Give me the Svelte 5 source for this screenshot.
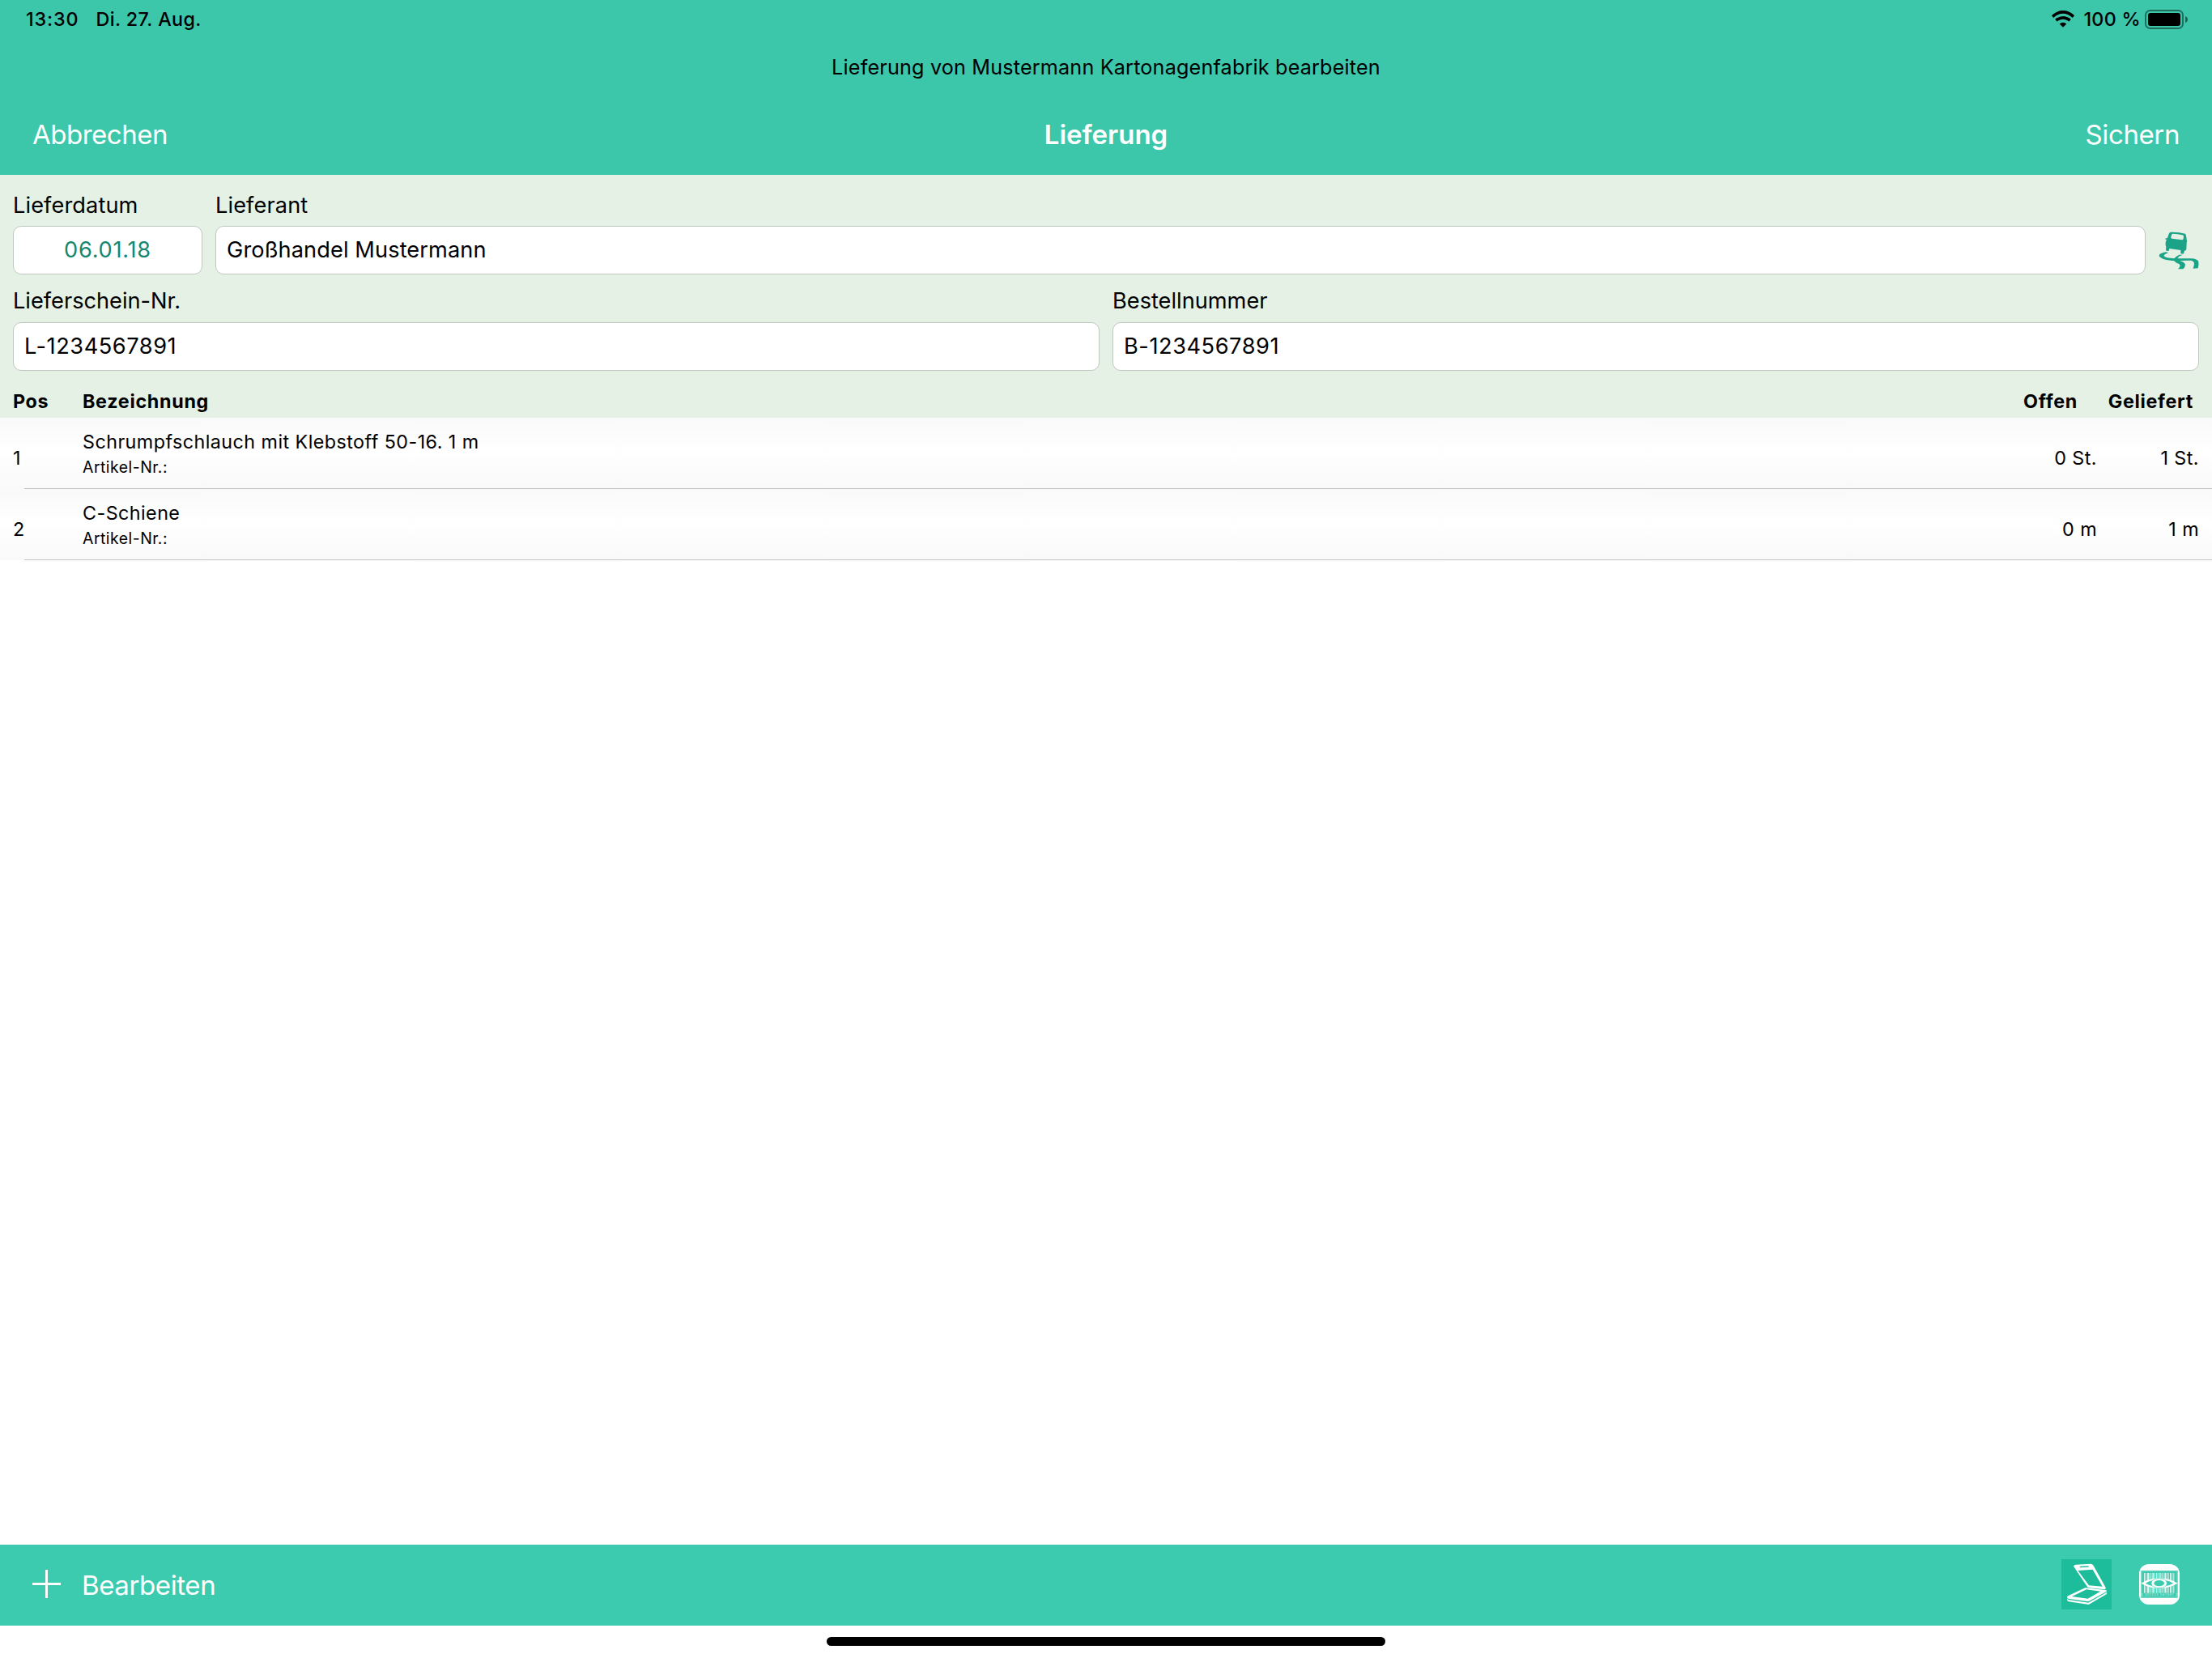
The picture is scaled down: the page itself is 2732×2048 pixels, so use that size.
<script>
  const statusTime = '13:30';
  const statusDate = 'Di. 27. Aug.';

  let delivery = $state({
    date: '06.01.18',
    supplier: 'Großhandel Mustermann',
    note: 'L-1234567891',
    order: 'B-1234567891'
  });

  const positions = [
    { pos: 1, name: 'Schrumpfschlauch mit Klebstoff 50-16. 1 m', open: '0 St.', delivered: '1 St.' },
    { pos: 2, name: 'C-Schiene', open: '0 m', delivered: '1 m' }
  ];

  // x offset and width of each bar
  const bars = [
    [384, 4], [391, 2], [396, 6], [404, 3], [410, 2], [415, 6], [424, 2], [429, 4],
    [436, 2], [441, 5], [449, 3], [455, 2], [460, 6], [469, 3], [475, 2], [480, 5],
    [488, 2], [493, 3]
  ];
</script>

<div class="screen">
  <header>
    <div class="status">
      <span class="time">{statusTime}</span>
      <span class="date">{statusDate}</span>
      <svg class="wifi" viewBox="105 41 84 62">
        <path d="M108 63Q147 29 186 63" fill="none" stroke="#000" stroke-width="11" />
        <path d="M121 77Q147 57 173 77" fill="none" stroke="#000" stroke-width="11" />
        <path d="M134 90Q147 79 160 90L147 103Z" />
      </svg>
      <span class="percent">100 %</span>
      <svg class="battery" viewBox="0 0 54 24">
        <rect x="1" y="1" width="46" height="22" rx="5.5" fill="none" stroke="#000" stroke-opacity=".45" stroke-width="2" />
        <rect x="4" y="4" width="40" height="16" rx="3" />
        <path d="M50 8q3 1 3 4t-3 4z" fill-opacity=".5" />
      </svg>
    </div>
    <div class="subtitle">Lieferung von Mustermann Kartonagenfabrik bearbeiten</div>
    <nav>
      <button class="cancel">Abbrechen</button>
      <h1>Lieferung</h1>
      <button class="save">Sichern</button>
    </nav>
  </header>

  <section class="form">
    <div class="fields">
      <label class="small">
        <span>Lieferdatum</span>
        <input class="day" bind:value={delivery.date} />
      </label>
      <label>
        <span>Lieferant</span>
        <input bind:value={delivery.supplier} />
      </label>
      <svg class="car" viewBox="78 43 150 144">
        <path
          fill-rule="evenodd"
          d="M124 48Q152 47 177 54Q180 57 182 75L182 80Q183 84 182 91L181 112Q179 117 174 117L171 128Q165 130 160 127L160 115L118 109L116 117Q111 119 105 116L106 102Q103 98 104 87Q105 79 110 72L117 53Q119 49 124 48ZM130 54Q126 55 124 67Q123 71 127 72L164 77Q169 77 170 73L171 64Q171 60 166 59Q150 54 130 54Z"
        />
        <path d="M103 72l7-3v6l-6 1zM176 78l8 1-1 5-7-2z" />
        <path d="M104 122Q80 127 80 135Q81 144 107 151Q137 156 163 154L194 153Q209 154 210 164Q210 174 206 183L224 182Q228 170 226 158Q222 147 199 146L137 146Q103 144 98 137Q96 131 115 124Z" />
        <path d="M154 132Q135 142 135 151Q136 160 154 166Q163 172 150 185L169 185Q180 174 175 164Q170 158 158 155Q147 149 149 144Q152 137 167 132Z" />
      </svg>
    </div>
    <div class="fields second">
      <label>
        <span>Lieferschein-Nr.</span>
        <input class="number" bind:value={delivery.note} />
      </label>
      <label>
        <span>Bestellnummer</span>
        <input class="number" bind:value={delivery.order} />
      </label>
    </div>
    <div class="grid head">
      <span>Pos</span>
      <span>Bezeichnung</span>
      <span class="open">Offen</span>
      <span class="delivered">Geliefert</span>
    </div>
  </section>

  <main>
    {#each positions as item}
      <div class="row">
        <div class="grid">
          <span>{item.pos}</span>
          <div class="article">
            <span class="name">{item.name}</span>
            <span class="nr">Artikel-Nr.:</span>
          </div>
          <span class="open">{item.open}</span>
          <span class="delivered">{item.delivered}</span>
        </div>
        <div class="line"></div>
      </div>
    {/each}
  </main>

  <footer>
    <svg class="plus" viewBox="0 0 35 35">
      <path d="M16 0h3v16h16v3H19v16h-3V19H0v-3h16z" fill="#fff" />
    </svg>
    <button class="edit">Bearbeiten</button>
    <svg class="scanner" viewBox="78 78 186 186">
      <path fill="#1dbd9c" d="M78 78h186v186H78z" />
      <g fill="#fff" fill-rule="evenodd">
        <path d="M123 104Q124 99 131 98L187 95Q194 96 197 102L242 183Q244 189 238 190L180 184Q174 183 172 177ZM139 120L180 175L230 179L194 116ZM147 104Q143 107 148 109L178 107Q182 104 178 103Z" />
        <path d="M99 219Q98 215 104 213L166 184L241 192Q247 193 246 197L178 235L103 224ZM117 216L176 224L223 197L171 190Z" />
        <path d="M99 223L103 228L178 239L246 200L246 207L179 246L105 235Q98 233 99 223Z" />
      </g>
    </svg>
    <svg class="barcode" viewBox="366 96 150 150">
      <rect x="366" y="96" width="150" height="150" rx="36" fill="#fff" />
      <path fill="#3ccbaf" d="M373 120h136v101H373z" />
      <path d="M376 123h130v95H376z" fill="none" stroke="#fff" stroke-opacity=".3" stroke-width="2" />
      {#each bars as [x, width]}
        <rect {x} y="129" {width} height="74" fill="#fff" fill-opacity=".8" />
      {/each}
      <path d="M373 167Q440 129 509 167Q440 205 373 167Z" fill="#fff" />
      <path d="M389 167Q402 160 415 157Q408 167 415 177Q402 174 389 167ZM493 167Q480 160 465 157Q472 167 465 177Q480 174 493 167Z" fill="#3ccbaf" />
      <ellipse cx="440" cy="167" rx="30" ry="18" fill="none" stroke="#3ccbaf" stroke-width="2" />
      <ellipse cx="440" cy="167" rx="19" ry="11" fill="#3ccbaf" />
      <text x="373" y="212" textLength="135" fill="#fff" fill-opacity=".75" font-size="11">4 001234 567897 3</text>
    </svg>
  </footer>
  <div class="home"><div class="indicator"></div></div>
</div>

<style>
  :global(body) {
    margin: 0;
  }

  .screen {
    display: flex;
    flex-direction: column;
    width: 2732px;
    height: 2048px;
    background: #fff;
    color: #000;
    font-family: Inter, "Liberation Sans", sans-serif;
    font-size: 23.3px;
    overflow: hidden;
  }

  svg {
    display: block;
    flex: none;
  }

  button,
  input {
    font-family: inherit;
    box-sizing: border-box;
  }

  button {
    padding: 0;
    border: none;
    background: none;
    color: #fff;
    font-size: 33px;
    letter-spacing: -0.4px;
  }

  header {
    height: 216px;
    background: #3cc7ab;
  }

  .status {
    display: flex;
    align-items: center;
    height: 47px;
    padding: 0 29px 0 32px;
    font-weight: 500;
  }

  .time {
    letter-spacing: 0.9px;
  }

  .date {
    margin-left: 21px;
    letter-spacing: 0.4px;
  }

  .wifi {
    width: 28px;
    height: 21px;
    margin-left: auto;
  }

  .percent {
    margin: 0 5px 0 11px;
    letter-spacing: 0.3px;
  }

  .battery {
    width: 54px;
    height: 24px;
  }

  .subtitle {
    line-height: 72px;
    text-align: center;
    font-size: 25.2px;
    letter-spacing: 0.17px;
  }

  nav {
    display: grid;
    grid-template-columns: 1fr auto 1fr;
    align-items: center;
    height: 94px;
    padding: 0 40px;
  }

  .cancel {
    justify-self: start;
    letter-spacing: -0.5px;
  }

  .save {
    justify-self: end;
  }

  h1 {
    margin: 0;
    color: #fff;
    font-size: 33px;
    font-weight: 600;
  }

  .form {
    height: 288px;
    padding-top: 12px;
    background: #e4f1e4;
  }

  .fields {
    display: flex;
    align-items: flex-end;
    gap: 16px;
    padding: 0 16px;
  }

  .second {
    margin-top: 7px;
  }

  label {
    display: flex;
    flex: 1;
    flex-direction: column;
    font-size: 27.2px;
    line-height: 51px;
    letter-spacing: 0.1px;
  }

  .second label {
    gap: 1px;
    letter-spacing: 0;
  }

  .small {
    flex: none;
    width: 234px;
  }

  input {
    width: 100%;
    height: 60px;
    padding: 0 13px 2px;
    border: 1px solid #bfc8c0;
    border-radius: 10px;
    background: #fff;
    color: #000;
    font-size: 27.2px;
    letter-spacing: 0.1px;
  }

  .number {
    letter-spacing: 0.55px;
  }

  .day {
    color: #16866f;
    text-align: center;
    letter-spacing: 0.75px;
  }

  .car {
    width: 50px;
    height: 48px;
    margin-bottom: 6px;
    fill: #1aa386;
  }

  .grid {
    display: grid;
    grid-template-columns: 86px 1fr 151px 126px;
    align-items: center;
    padding: 0 16px;
    letter-spacing: 0.45px;
  }

  .head {
    height: 41px;
    padding-top: 17px;
    font-weight: 700;
    letter-spacing: 0.7px;
  }

  .open,
  .delivered {
    text-align: right;
  }

  .head .open {
    padding-right: 24px;
  }

  .head .delivered {
    padding-right: 7px;
  }

  main {
    flex: 1;
  }

  .row {
    height: 88px;
    background: linear-gradient(#f9f9f9, #fff 50%, #f9f9f9);
  }

  .row .grid {
    height: 87px;
    padding-top: 6px;
    box-sizing: content-box;
    margin-bottom: -6px;
  }

  .article {
    display: flex;
    flex-direction: column;
    margin-top: -10px;
  }

  .name {
    line-height: 33px;
  }

  .nr {
    font-size: 19.4px;
    line-height: 30px;
    letter-spacing: 0.5px;
  }

  .line {
    height: 1px;
    margin-left: 30px;
    background: #c3c3c5;
  }

  footer {
    display: flex;
    align-items: center;
    height: 100px;
    padding: 0 40px;
    background: #3ccbaf;
  }

  .plus {
    width: 35px;
    height: 35px;
    margin-top: -3px;
  }

  .edit {
    margin-left: 26px;
  }

  .scanner {
    width: 62px;
    height: 62px;
    margin: -2px 34px 0 auto;
  }

  .barcode {
    width: 50px;
    height: 50px;
    margin-top: -2px;
  }

  .home {
    display: flex;
    justify-content: center;
    height: 26px;
    padding-top: 14px;
  }

  .indicator {
    width: 690px;
    height: 11px;
    border-radius: 6px;
    background: #000;
  }
</style>
